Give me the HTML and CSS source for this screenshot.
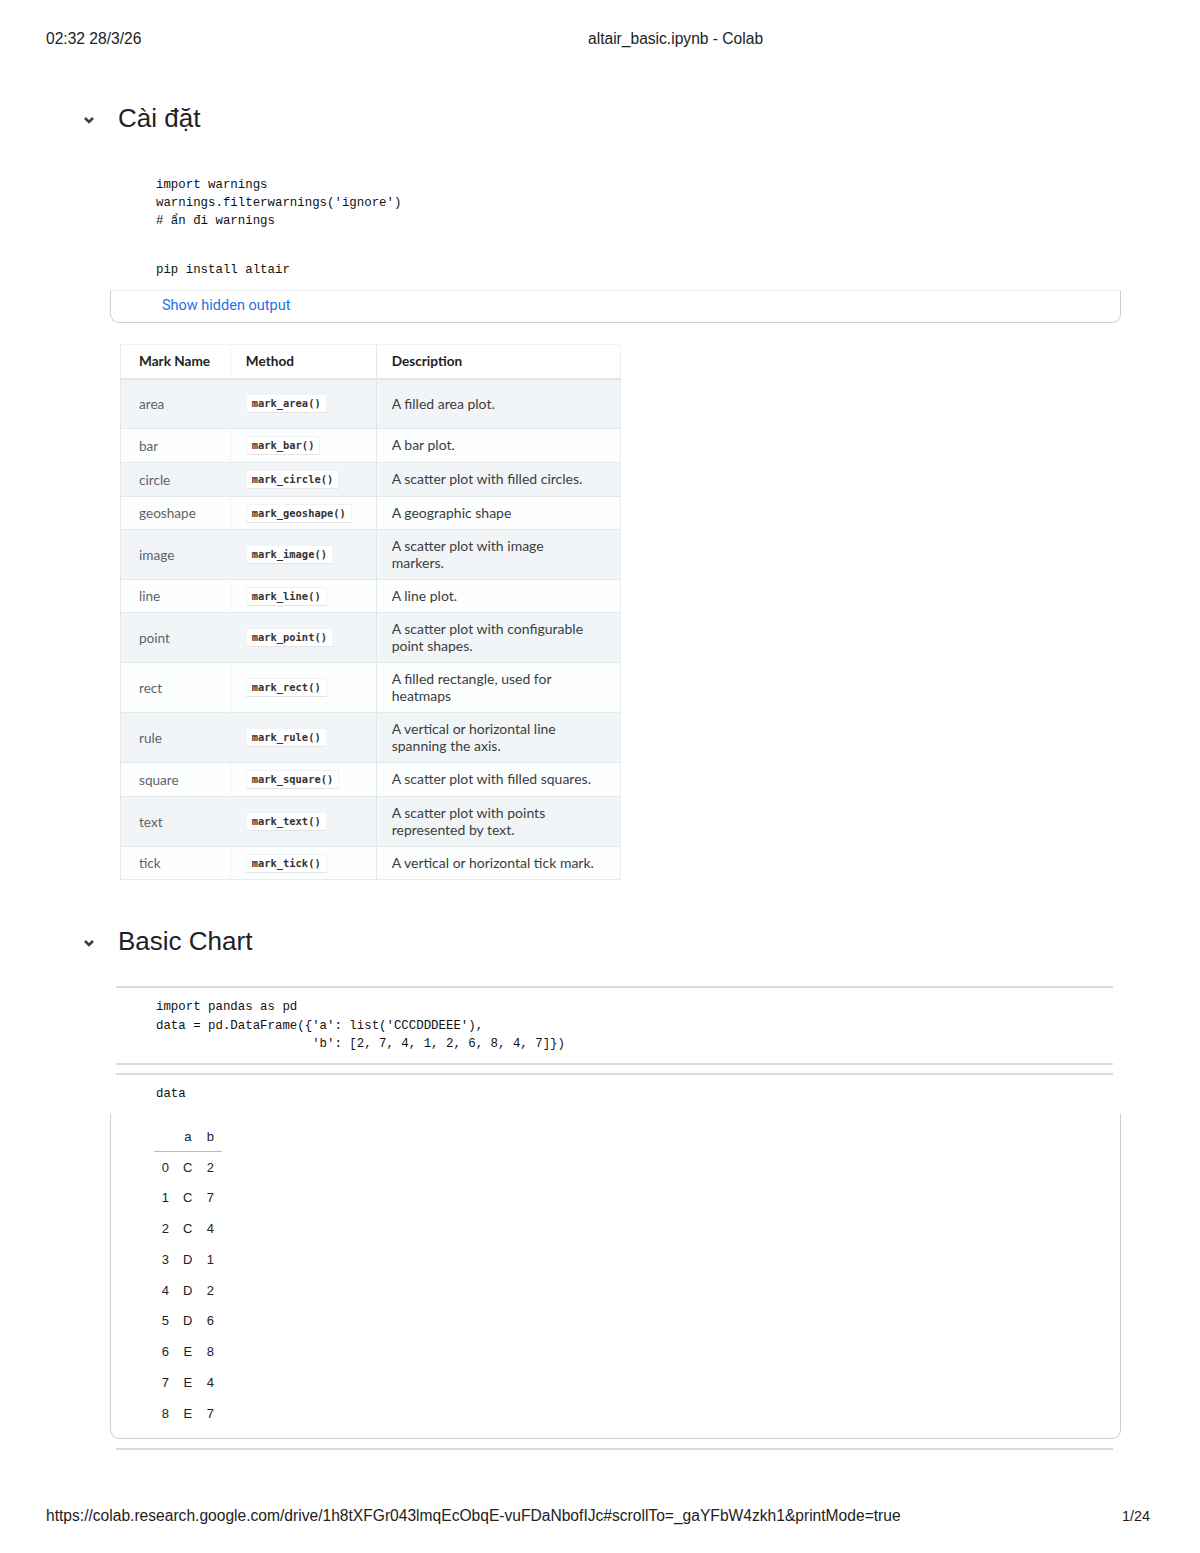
FILE: index.html
```html
<!DOCTYPE html>
<html lang="vi">
<head>
<meta charset="utf-8">
<title>altair_basic.ipynb - Colab</title>
<link rel="stylesheet" href="styles.css">
</head>
<body>
<header class="print-header">
  <span class="ph-date">02:32 28/3/26</span>
  <span class="ph-title">altair_basic.ipynb - Colab</span>
</header>

<main class="notebook">
  <section class="section">
    <h2 class="section-head">
      <svg class="chev" viewBox="0 0 12 12" width="12" height="12"><polyline points="2,4 6,8 10,4"/></svg>
      <span>Cài đặt</span>
    </h2>

    <div class="cell cell-plain">
      <pre class="code">import warnings
warnings.filterwarnings('ignore')
# ẩn đi warnings</pre>
      <pre class="code code-pip">pip install altair</pre>
    </div>
    <div class="output-box output-hidden">
      <span class="show-hidden">Show hidden output</span>
    </div>

    <table class="marks">
      <thead>
        <tr class="r34"><th class="c1">Mark Name</th><th class="c2">Method</th><th class="c3">Description</th></tr>
      </thead>
      <tbody>
        <tr class="r50 odd"><td class="name">area</td><td><code>mark_area()</code></td><td class="desc">A filled area plot.</td></tr>
        <tr class="r34"><td class="name">bar</td><td><code>mark_bar()</code></td><td class="desc">A bar plot.</td></tr>
        <tr class="r34 odd"><td class="name">circle</td><td><code>mark_circle()</code></td><td class="desc">A scatter plot with filled circles.</td></tr>
        <tr class="r33"><td class="name">geoshape</td><td><code>mark_geoshape()</code></td><td class="desc">A geographic shape</td></tr>
        <tr class="r50 odd"><td class="name">image</td><td><code>mark_image()</code></td><td class="desc">A scatter plot with image<br>markers.</td></tr>
        <tr class="r33"><td class="name">line</td><td><code>mark_line()</code></td><td class="desc">A line plot.</td></tr>
        <tr class="r50 odd"><td class="name">point</td><td><code>mark_point()</code></td><td class="desc">A scatter plot with configurable<br>point shapes.</td></tr>
        <tr class="r50"><td class="name">rect</td><td><code>mark_rect()</code></td><td class="desc">A filled rectangle, used for<br>heatmaps</td></tr>
        <tr class="r50 odd"><td class="name">rule</td><td><code>mark_rule()</code></td><td class="desc">A vertical or horizontal line<br>spanning the axis.</td></tr>
        <tr class="r34"><td class="name">square</td><td><code>mark_square()</code></td><td class="desc">A scatter plot with filled squares.</td></tr>
        <tr class="r50 odd"><td class="name">text</td><td><code>mark_text()</code></td><td class="desc">A scatter plot with points<br>represented by text.</td></tr>
        <tr class="r33"><td class="name">tick</td><td><code>mark_tick()</code></td><td class="desc">A vertical or horizontal tick mark.</td></tr>
      </tbody>
    </table>
  </section>

  <section class="section section-2">
    <h2 class="section-head">
      <svg class="chev" viewBox="0 0 12 12" width="12" height="12"><polyline points="2,4 6,8 10,4"/></svg>
      <span>Basic Chart</span>
    </h2>

    <div class="cell cell-lined">
      <pre class="code code-tall">import pandas as pd
data = pd.DataFrame({'a': list('CCCDDDEEE'),
                     'b': [2, 7, 4, 1, 2, 6, 8, 4, 7]})</pre>
    </div>
    <div class="cell cell-topline">
      <pre class="code">data</pre>
    </div>
    <div class="output-box output-df">
      <table class="df">
        <thead>
          <tr><th></th><th>a</th><th>b</th></tr>
        </thead>
        <tbody>
          <tr><th>0</th><td>C</td><td>2</td></tr>
          <tr><th>1</th><td>C</td><td>7</td></tr>
          <tr><th>2</th><td>C</td><td>4</td></tr>
          <tr><th>3</th><td>D</td><td>1</td></tr>
          <tr><th>4</th><td>D</td><td>2</td></tr>
          <tr><th>5</th><td>D</td><td>6</td></tr>
          <tr><th>6</th><td>E</td><td>8</td></tr>
          <tr><th>7</th><td>E</td><td>4</td></tr>
          <tr><th>8</th><td>E</td><td>7</td></tr>
        </tbody>
      </table>
    </div>
    <div class="end-line"></div>
  </section>
</main>

<footer class="print-footer">
  <span class="pf-url">https://colab.research.google.com/drive/1h8tXFGr043lmqEcObqE-vuFDaNbofIJc#scrollTo=_gaYFbW4zkh1&amp;printMode=true</span>
  <span class="pf-page">1/24</span>
</footer>
</body>
</html>
```

FILE: styles.css
```css
* { box-sizing: border-box; }

html, body { margin: 0; padding: 0; background: #fff; }

body {
  width: 1200px;
  min-height: 1553px;
  display: flex;
  flex-direction: column;
  font-family: "Liberation Sans", Arial, sans-serif;
  color: #202124;
}

/* print header / footer */
.print-header {
  display: grid;
  grid-template-columns: 542px auto;
  padding: 30px 0 0 46px;
  font-size: 15.6px;
  line-height: 18px;
  color: #222;
}

.print-footer {
  margin-top: auto;
  display: flex;
  justify-content: space-between;
  padding: 0 50px 28px 46px;
  font-size: 15.6px;
  line-height: 18px;
  color: #222;
}

.pf-page { font-size: 14.4px; }

/* notebook */
.notebook { display: flex; flex-direction: column; }

.section { display: flex; flex-direction: column; }

.section-head {
  margin: 55px 0 0 0;
  padding-left: 83px;
  display: flex;
  align-items: center;
  gap: 23px;
  height: 30px;
  font-weight: normal;
  font-size: 26px;
  line-height: 30px;
  color: #202124;
}

.section-2 .section-head { margin-top: 46px; }

.chev {
  fill: none;
  stroke: #3c4043;
  stroke-width: 2.6;
  stroke-linecap: butt;
  stroke-linejoin: miter;
  margin-top: 4px;
  flex: none;
}

.code {
  margin: 0;
  font-family: "Liberation Mono", "DejaVu Sans Mono", monospace;
  font-size: 12.4px;
  line-height: 18px;
  color: #111;
  white-space: pre;
}

.cell-plain {
  margin: 43px 0 0 110px;
  width: 1010px;
  padding-left: 46px;
}

.code-pip { margin-top: 31px; }

.output-box {
  margin-left: 110px;
  width: 1011px;
  border: 1px solid #cfcfcf;
  border-top-color: #ececec;
  border-radius: 0 0 9px 9px;
}

.output-hidden {
  margin-top: 11px;
  height: 33px;
  display: flex;
  align-items: center;
  padding: 0 0 3px 51px;
}

.show-hidden {
  font-family: Roboto, "Liberation Sans", sans-serif;
  font-size: 14.5px;
  color: #1a73e8;
}

/* mark table */
.marks {
  margin: 21px 0 0 120px;
  width: 501px;
  border-collapse: collapse;
  font-family: Lato, "Liberation Sans", sans-serif;
  font-size: 13.6px;
  border-left: 1px solid #e4e8eb;
  border-right: 1px solid #eef1f3;
  border-bottom: 1px solid #e8ebee;
}

.marks th, .marks td {
  padding: 0;
  text-align: left;
  vertical-align: middle;
  border-top: 1px solid #e6e9ec;
}

.marks th {
  font-weight: bold;
  color: #222;
  border-top: 1px solid #f0f2f4;
  border-bottom: 2px solid #e1e5e8;
}

.marks .c1 { width: 110px; }
.marks .c2 { width: 146px; }
.marks .c3 { width: 245px; }

.marks th:nth-child(1), .marks td:nth-child(1) { padding-left: 18px; }
.marks th:nth-child(2), .marks td:nth-child(2) { padding-left: 15px; border-left: 1px solid #f0f2f4; }
.marks th:nth-child(3), .marks td:nth-child(3) { padding-left: 15px; border-left: 1px solid #e2e6e9; }

.marks tr.r34 { height: 34px; }
.marks tr.r33 { height: 33px; }
.marks tr.r50 { height: 50px; }

.marks tbody tr { background: #fdfefe; }
.marks tbody tr.odd { background: #f2f5f7; }

.marks .name { color: #5f6367; }
.marks .desc { color: #3a3d40; font-size: 14px; line-height: 16.5px; }

.marks code {
  display: inline-block;
  background: #fff;
  border: 1px solid #f0f2f4;
  border-bottom-color: #e2e4e6;
  padding: 0 5px;
  height: 19px;
  line-height: 17px;
  font-family: "DejaVu Sans Mono", "Liberation Mono", monospace;
  font-weight: bold;
  font-size: 10.4px;
  color: #333;
}

/* cell 2 */
.cell-lined {
  margin: 30px 0 0 116px;
  width: 997px;
  border-top: 2px solid #dadada;
  border-bottom: 2px solid #dadada;
  padding: 10px 0 9px 40px;
}

.code-tall { line-height: 18.5px; }

.cell-topline {
  margin: 8px 0 0 116px;
  width: 997px;
  border-top: 2px solid #dadada;
  padding: 10px 0 0 40px;
}

.output-df {
  margin-top: 11px;
  border-top: none;
  padding: 8px 0 9px 43px;
}

.df {
  border-collapse: collapse;
  font-family: "Liberation Sans", Arial, sans-serif;
  font-size: 13px;
  color: #222;
}

.df th, .df td {
  width: 22.5px;
  padding: 0;
  text-align: center;
  font-weight: normal;
  height: 30.8px;
}

.df thead th {
  height: 30px;
  border-bottom: 1px solid #bdbdbd;
}

.end-line {
  margin: 9px 0 0 116px;
  width: 997px;
  border-top: 2px solid #dadada;
}
```
